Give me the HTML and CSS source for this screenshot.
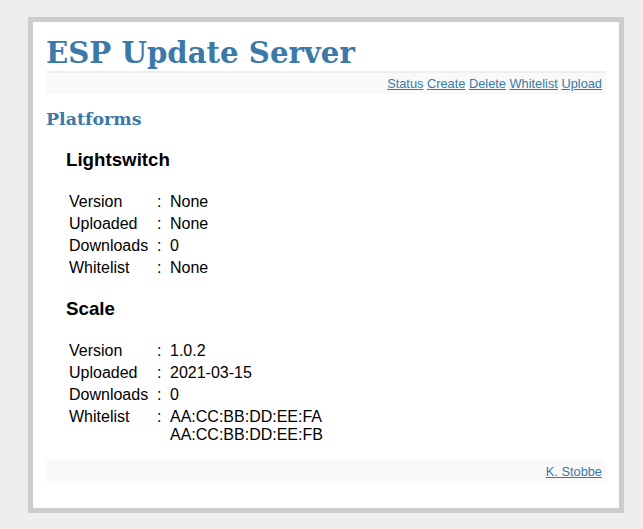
FILE: index.html
```html
<!DOCTYPE html>
<html lang="en">
<head>
<meta charset="utf-8">
<title>ESP Update Server</title>
<link rel="stylesheet" href="styles.css">
</head>
<body>
<div class="page">
  <h1 class="title">ESP Update Server</h1>
  <nav class="nav">
    <a href="#">Status</a> <a href="#">Create</a> <a href="#">Delete</a> <a href="#">Whitelist</a> <a href="#">Upload</a>
  </nav>
  <h2 class="section-title">Platforms</h2>
  <div class="platforms">
    <div class="platform">
      <h3 class="platform-name">Lightswitch</h3>
      <table class="info">
        <tr><td class="label">Version</td><td class="colon">:</td><td class="value">None</td></tr>
        <tr><td class="label">Uploaded</td><td class="colon">:</td><td class="value">None</td></tr>
        <tr><td class="label">Downloads</td><td class="colon">:</td><td class="value">0</td></tr>
        <tr><td class="label">Whitelist</td><td class="colon">:</td><td class="value">None</td></tr>
      </table>
    </div>
    <div class="platform">
      <h3 class="platform-name">Scale</h3>
      <table class="info">
        <tr><td class="label">Version</td><td class="colon">:</td><td class="value">1.0.2</td></tr>
        <tr><td class="label">Uploaded</td><td class="colon">:</td><td class="value">2021-03-15</td></tr>
        <tr><td class="label">Downloads</td><td class="colon">:</td><td class="value">0</td></tr>
        <tr><td class="label">Whitelist</td><td class="colon">:</td><td class="value">AA:CC:BB:DD:EE:FA<br>AA:CC:BB:DD:EE:FB</td></tr>
      </table>
    </div>
  </div>
  <footer class="footer"><a href="#">K. Stobbe</a></footer>
</div>
</body>
</html>
```
FILE: styles.css
```css
html, body {
  margin: 0;
  padding: 0;
}
body {
  background: #eeeeee;
  font-family: "Liberation Sans", Arial, sans-serif;
  font-size: 16px;
  color: #000;
  padding-top: 17px;
}
.page {
  box-sizing: border-box;
  width: 596px;
  margin-left: 28px;
  border: 5px solid #cccccc;
  background: #ffffff;
  padding: 0 13px 25px 13px;
}
a {
  color: #3a79a8;
}
.title {
  margin: 0;
  padding: 15px 0 2px 0;
  font-family: "DejaVu Serif", Georgia, serif;
  font-weight: bold;
  font-size: 29.2px;
  line-height: 32px;
  color: #3a79a8;
  border-bottom: 2px solid #eeeeee;
}
.nav {
  background: #f9f9f9;
  text-align: right;
  font-size: 12.8px;
  line-height: 15px;
  padding: 3px 4px 3px 4px;
}
.section-title {
  margin: 15px 0 20px 0;
  font-family: "DejaVu Serif", Georgia, serif;
  font-weight: bold;
  font-size: 17.4px;
  line-height: 20px;
  color: #3a79a8;
}
.platforms {
  margin-left: 20px;
  margin-bottom: 14px;
}
.platform-name {
  margin: 19px 0 21px 0;
  font-size: 18.72px;
  line-height: 21px;
  font-weight: bold;
}
.info {
  border-collapse: collapse;
  line-height: 18px;
}
.info td {
  padding: 2px 0;
  vertical-align: top;
}
.info .label {
  padding-left: 3px;
  width: 88px;
}
.info .colon {
  width: 13px;
}
.footer {
  background: #f9f9f9;
  text-align: right;
  font-size: 12.8px;
  line-height: 15px;
  padding: 4px 4px 4px 4px;
}
```
